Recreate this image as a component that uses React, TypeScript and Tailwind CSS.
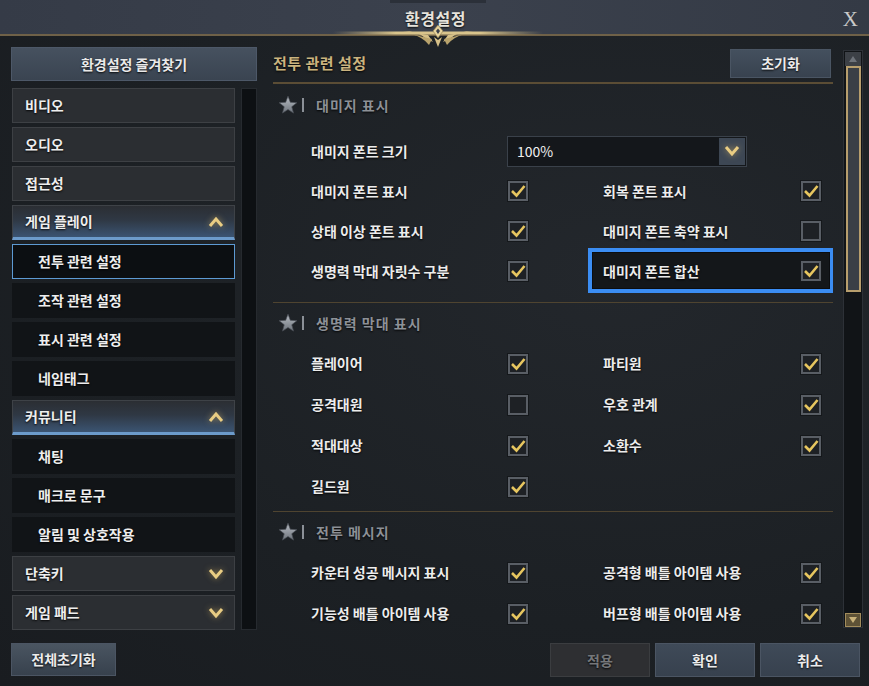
import React from "react";

const FONT = { fontFamily: '"Noto Sans CJK KR", "Noto Sans", sans-serif' };
const SHADOW = "[text-shadow:0_1px_2px_rgba(0,0,0,0.9)]";

type NavItem = { label: string; kind: "top" | "group" | "sub"; open?: boolean; selected?: boolean };

const navItems: NavItem[] = [
  { label: "비디오", kind: "top" },
  { label: "오디오", kind: "top" },
  { label: "접근성", kind: "top" },
  { label: "게임 플레이", kind: "group", open: true },
  { label: "전투 관련 설정", kind: "sub", selected: true },
  { label: "조작 관련 설정", kind: "sub" },
  { label: "표시 관련 설정", kind: "sub" },
  { label: "네임태그", kind: "sub" },
  { label: "커뮤니티", kind: "group", open: true },
  { label: "채팅", kind: "sub" },
  { label: "매크로 문구", kind: "sub" },
  { label: "알림 및 상호작용", kind: "sub" },
  { label: "단축키", kind: "group", open: false },
  { label: "게임 패드", kind: "group", open: false },
];

function Chevron({ up }: { up?: boolean }) {
  return (
    <svg width="16" height="12" viewBox="0 0 16 12" className="drop-shadow-[0_0_3px_rgba(230,190,100,0.6)]">
      <polyline
        points={up ? "2,10 8,3 14,10" : "2,2 8,9 14,2"}
        fill="none"
        stroke="#e9cd83"
        strokeWidth="3"
        strokeLinejoin="miter"
      />
    </svg>
  );
}

function Checkbox({ checked }: { checked: boolean }) {
  return (
    <div className="w-[20px] h-[20px] border-2 border-[#595e65] bg-[#1e2125] flex items-center justify-center shadow-[0_0_0_1px_#15181b]">
      {checked && (
        <svg width="16" height="14" viewBox="0 0 16 14">
          <path d="M2 7 L6.5 11.5 L14.5 2" fill="none" stroke="#e7c65f" strokeWidth="2.6" />
        </svg>
      )}
    </div>
  );
}

function Star() {
  return (
    <svg width="20" height="20" viewBox="0 0 24 24">
      <defs>
        <linearGradient id="sg" x1="0" y1="0" x2="0" y2="1">
          <stop offset="0" stopColor="#b9bec5" />
          <stop offset="1" stopColor="#6d737b" />
        </linearGradient>
      </defs>
      <path
        d="M12 1.5 L14.8 8.8 L22.6 9.2 L16.5 14.1 L18.6 21.7 L12 17.4 L5.4 21.7 L7.5 14.1 L1.4 9.2 L9.2 8.8 Z"
        fill="url(#sg)"
        stroke="#4a4f56"
        strokeWidth="0.8"
      />
    </svg>
  );
}

function SectionHeader({ title }: { title: string }) {
  return (
    <div className="h-[26px] flex items-center pl-[5px] gap-[4px]">
      <Star />
      <div className="w-[2px] h-[14px] bg-[#8b9097]" />
      <span className={`ml-[8px] text-[14px] text-[#8d9197] font-bold tracking-[1px] ${SHADOW}`}>{title}</span>
    </div>
  );
}

type Cell = { label: string; checked: boolean; highlight?: boolean } | null;

function Row({ left, right, h = "h-[40px]" }: { left: Cell; right: Cell; h?: string }) {
  const text = `text-[14px] text-[#ececec] font-bold ${SHADOW}`;
  return (
    <div className={`${h} grid grid-cols-[292px_268px]`}>
      <div className="flex items-center pl-[38px] pr-[37px]">
        {left && (
          <>
            <span className={`flex-1 ${text}`}>{left.label}</span>
            <Checkbox checked={left.checked} />
          </>
        )}
      </div>
      <div className="relative flex items-center pl-[38px] pr-[12px]">
        {right?.highlight && (
          <div className="absolute left-[23px] right-[-1px] top-[-3px] bottom-[-2px] border-[4px] border-[#3b8df3] bg-[#14171a] shadow-[inset_0_0_0_1px_#0b0d10]" />
        )}
        {right && (
          <>
            <span className={`relative flex-1 ${text}`}>{right.label}</span>
            <div className="relative">
              <Checkbox checked={right.checked} />
            </div>
          </>
        )}
      </div>
    </div>
  );
}

function Ornament() {
  return (
    <svg width="210" height="22" viewBox="0 0 210 22" className="absolute left-[333px] top-[25px] z-10">
      <defs>
        <linearGradient id="og" x1="0" y1="0" x2="1" y2="0">
          <stop offset="0" stopColor="#c9b27a" stopOpacity="0" />
          <stop offset="0.3" stopColor="#d9c48c" />
          <stop offset="0.7" stopColor="#d9c48c" />
          <stop offset="1" stopColor="#c9b27a" stopOpacity="0" />
        </linearGradient>
      </defs>
      <rect x="0" y="6.5" width="210" height="3" fill="url(#og)" />
      <path d="M70 6 Q85 6 92 13 L100 17 L95 10 Z" fill="#d6c088" />
      <path d="M140 6 Q125 6 118 13 L110 17 L115 10 Z" fill="#d6c088" />
      <path d="M78 9 Q90 12 96 20 L99 14 Z" fill="#b9a36c" />
      <path d="M132 9 Q120 12 114 20 L111 14 Z" fill="#b9a36c" />
      <path d="M105 0 L110 6 L105 13 L100 6 Z" fill="#e6d39c" stroke="#8d7a4f" strokeWidth="0.6" />
      <path d="M105 3.5 L107 6 L105 9 L103 6 Z" fill="#3a3f4a" />
      <path d="M101 12 L105 22 L109 12 L105 15 Z" fill="#d6c088" />
    </svg>
  );
}

export default function App() {
  return (
    <div
      style={FONT}
      className="relative w-[869px] h-[686px] bg-[radial-gradient(ellipse_at_70%_40%,#23272c_0%,#1c2024_60%,#191c20_100%)] flex flex-col overflow-hidden select-none"
    >
      {/* title bar */}
      <div className="relative h-[34px] shrink-0 bg-[linear-gradient(90deg,#353b47_0%,#3b414d_50%,#343a45_100%)] flex items-center justify-center">
        <div className="absolute left-[390px] top-0 w-[96px] h-[3px] bg-[#2b3039]" />
        <span className="text-[16px] text-[#e6e3dc] font-bold tracking-[0.5px] [text-shadow:0_1px_2px_rgba(0,0,0,0.8)] ml-[2px] mt-[1px]">
          환경설정
        </span>
        <span
          className="absolute right-[11px] top-[4px] text-[21px] text-[#c9c9c9]"
          style={{ fontFamily: '"Liberation Serif", serif' }}
        >
          X
        </span>
      </div>
      <div className="h-[2px] shrink-0 bg-[#6f6148]" />
      <Ornament />

      {/* body */}
      <div className="flex h-[594px] shrink-0">
        {/* left */}
        <div className="w-[257px] pl-[11px] shrink-0">
          <div className="mt-[11px] h-[34px] w-[246px] border border-[#4d5868] bg-[linear-gradient(180deg,#46515f_0%,#3a4451_100%)] flex items-center justify-center">
            <span className={`text-[14px] text-[#e9e9e9] font-bold ${SHADOW}`}>환경설정 즐겨찾기</span>
          </div>
          <div className="mt-[7px] flex">
            <div className="ml-[1px] w-[223px] flex flex-col gap-[4px]">
              {navItems.map((it) => {
                if (it.kind === "sub") {
                  return (
                    <div
                      key={it.label}
                      className={`h-[35px] flex items-center ${
                        it.selected
                          ? "border border-[#5d9ad3] bg-[#0c0f12] pl-[25px]"
                          : "bg-[#111417] pl-[26px]"
                      }`}
                    >
                      <span className={`text-[14px] text-[#eeeeee] font-bold ${SHADOW}`}>{it.label}</span>
                    </div>
                  );
                }
                const open = it.kind === "group" && it.open;
                return (
                  <div
                    key={it.label}
                    className={`h-[35px] flex items-center justify-between pl-[12px] pr-[10px] border ${
                      open
                        ? "border-[#3e4247] border-b-[3px] border-b-[#6c9bcb] bg-[linear-gradient(180deg,#2b2e33_0%,#2f3844_45%,#3b5472_100%)]"
                        : "border-[#3d4044] bg-[#2b2e32]"
                    }`}
                  >
                    <span className={`text-[14px] text-[#eeeeee] font-bold ${SHADOW}`}>{it.label}</span>
                    {it.kind === "group" && <Chevron up={it.open} />}
                  </div>
                );
              })}
            </div>
            <div className="ml-[6px] w-[16px] h-[542px] bg-[#0d1013] border border-[#262a2f]" />
          </div>
        </div>

        {/* right */}
        <div className="ml-[16px] w-[560px] shrink-0 flex flex-col">
          <div className="mt-[13px] h-[29px] flex items-center justify-between pr-[2px]">
            <span className="text-[15px] font-bold text-[#cbb47f] tracking-[0.5px] [text-shadow:0_1px_2px_rgba(0,0,0,0.9)]">
              전투 관련 설정
            </span>
            <div className="w-[101px] h-[29px] border border-[#4a5563] bg-[linear-gradient(180deg,#44505e_0%,#38424f_100%)] flex items-center justify-center">
              <span className={`text-[14px] text-[#ececec] font-bold ${SHADOW}`}>초기화</span>
            </div>
          </div>
          <div className="mt-[4px] h-[2px] bg-[#5b4d35]" />
          <div className="h-[546px] overflow-hidden">
            {/* section 1 */}
            <div className="mt-[8px]">
              <SectionHeader title="대미지 표시" />
            </div>
            <div className="mt-[13px] h-[40px] flex items-center pl-[38px]">
              <span className={`w-[196px] text-[14px] text-[#ececec] font-bold ${SHADOW}`}>대미지 폰트 크기</span>
              <div className="w-[240px] h-[31px] border border-[#3a414a] bg-[#14171b] flex items-center justify-between pl-[9px] pr-[1px]">
                <span className="text-[14px] text-[#f0f0f0]">100%</span>
                <div className="w-[26px] h-[27px] bg-[#3d4754] flex items-center justify-center">
                  <Chevron />
                </div>
              </div>
            </div>
            <Row left={{ label: "대미지 폰트 표시", checked: true }} right={{ label: "회복 폰트 표시", checked: true }} />
            <Row left={{ label: "상태 이상 폰트 표시", checked: true }} right={{ label: "대미지 폰트 축약 표시", checked: false }} />
            <Row
              left={{ label: "생명력 막대 자릿수 구분", checked: true }}
              right={{ label: "대미지 폰트 합산", checked: true, highlight: true }}
            />
            <div className="mt-[11px] h-px bg-[#4f4430]" />

            {/* section 2 */}
            <div className="mt-[7px]">
              <SectionHeader title="생명력 막대 표시" />
            </div>
            <div className="mt-[7px]">
              <Row h="h-[41px]" left={{ label: "플레이어", checked: true }} right={{ label: "파티원", checked: true }} />
              <Row h="h-[41px]" left={{ label: "공격대원", checked: false }} right={{ label: "우호 관계", checked: true }} />
              <Row h="h-[41px]" left={{ label: "적대대상", checked: true }} right={{ label: "소환수", checked: true }} />
              <Row h="h-[41px]" left={{ label: "길드원", checked: true }} right={null} />
            </div>
            <div className="mt-[4px] h-px bg-[#4f4430]" />

            {/* section 3 */}
            <div className="mt-[7px]">
              <SectionHeader title="전투 메시지" />
            </div>
            <div className="mt-[7px]">
              <Row
                h="h-[41px]"
                left={{ label: "카운터 성공 메시지 표시", checked: true }}
                right={{ label: "공격형 배틀 아이템 사용", checked: true }}
              />
              <Row
                h="h-[41px]"
                left={{ label: "기능성 배틀 아이템 사용", checked: true }}
                right={{ label: "버프형 배틀 아이템 사용", checked: true }}
              />
            </div>
          </div>
        </div>

        {/* right scrollbar */}
        <div className="ml-[10px] mt-[14px] w-[20px] h-[578px] border border-[#2d3137] bg-[#111417] flex flex-col items-center pt-[1px]">
          <div className="w-[16px] h-[14px] bg-[#3c4046] flex items-center justify-center">
            <svg width="10" height="8" viewBox="0 0 10 8">
              <path d="M5 1 L9 7 L1 7 Z" fill="#6e737a" />
            </svg>
          </div>
          <div className="w-[15px] h-[226px] border-2 border-[#b79e6d] bg-[#3a3f46]" />
          <div className="flex-1" />
          <div className="w-[16px] h-[14px] bg-[#5e5236] border border-[#a38d5c] flex items-center justify-center">
            <svg width="10" height="8" viewBox="0 0 10 8">
              <path d="M1 1 L9 1 L5 7 Z" fill="#c9b27a" />
            </svg>
          </div>
        </div>
      </div>

      {/* bottom buttons */}
      <div className="mt-[13px] flex items-start">
        <div className="ml-[11px] w-[105px] h-[33px] border border-[#4b5563] bg-[linear-gradient(180deg,#4a5561_0%,#37414d_100%)] flex items-center justify-center">
          <span className={`text-[14px] text-[#ececec] font-bold ${SHADOW}`}>전체초기화</span>
        </div>
        <div className="ml-auto mr-[9px] flex gap-[5px]">
          <div className="w-[100px] h-[34px] border border-[#3b3d40] bg-[#2e2f32] flex items-center justify-center">
            <span className={`text-[14px] text-[#75777a] font-bold ${SHADOW}`}>적용</span>
          </div>
          <div className="w-[100px] h-[34px] border border-[#4b5563] bg-[linear-gradient(180deg,#3f4a58_0%,#37414e_100%)] flex items-center justify-center">
            <span className={`text-[14px] text-[#ececec] font-bold ${SHADOW}`}>확인</span>
          </div>
          <div className="w-[100px] h-[34px] border border-[#4b5563] bg-[linear-gradient(180deg,#3f4a58_0%,#37414e_100%)] flex items-center justify-center">
            <span className={`text-[14px] text-[#ececec] font-bold ${SHADOW}`}>취소</span>
          </div>
        </div>
      </div>
    </div>
  );
}
